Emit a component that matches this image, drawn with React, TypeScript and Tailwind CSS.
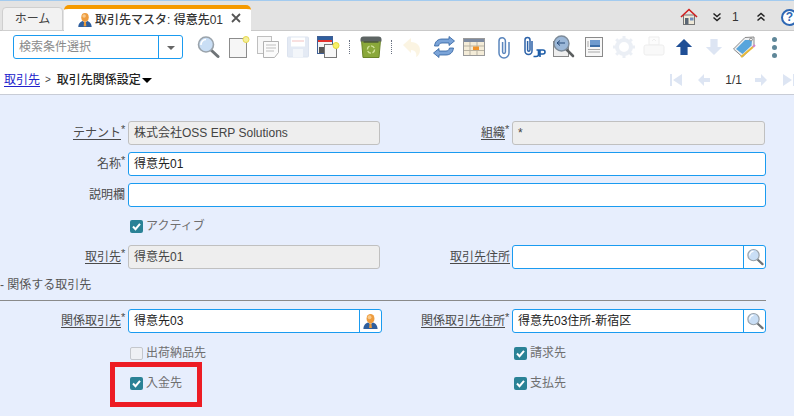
import type { ReactNode } from "react";

const FONT = "font-['Liberation_Sans','Noto_Sans_CJK_JP',sans-serif]";

function PersonIcon({ size = 18 }: { size?: number }) {
  return (
    <svg width={size} height={size} viewBox="0 0 18 18">
      <path d="M1.500 17c0-4 2.500-6.500 5-7l2.500 2 2.500-2c2.500.5 5 3 5 7z" fill="#2f5f9e" />
      <path d="M8 11h2l.5 5h-3z" fill="#e89a3c" />
      <ellipse cx="9" cy="6" rx="4.200" ry="5" fill="#ee9c3e" />
      <ellipse cx="8" cy="4.500" rx="2" ry="2" fill="#f8c98a" />
    </svg>
  );
}

function SearchIcon({ size = 24 }: { size?: number }) {
  return (
    <svg width={size} height={size} viewBox="0 0 24 24">
      <path d="M15 15l7 6.500" stroke="#6f7477" strokeWidth="3" strokeLinecap="round" />
      <circle cx="10" cy="9.500" r="7.500" fill="#c9def5" stroke="#9aa3ab" strokeWidth="1.600" />
      <path d="M5 10a5 5 0 0 1 5-5.500" stroke="#fff" strokeWidth="1.500" fill="none" />
    </svg>
  );
}

function NewDoc() {
  return (
    <svg width="24" height="24" viewBox="0 0 24 24">
      <rect x="3.500" y="3.500" width="17" height="19" fill="#f6f6f6" stroke="#8c8c8c" />
      <circle cx="20" cy="4.500" r="3" fill="#f4ef9a" stroke="#e8d94f" />
    </svg>
  );
}

function CopyDoc() {
  return (
    <svg width="24" height="24" viewBox="0 0 24 24" opacity="0.75">
      <rect x="1.500" y="1.500" width="14" height="17" fill="#f5f5f5" stroke="#aaa" />
      <path d="M7.500 6.500h15v11l-4 5h-11z" fill="#fafafa" stroke="#999" />
      <path d="M10 10h10M10 13h10M10 16h8" stroke="#aaa" />
    </svg>
  );
}

function SaveIcon() {
  return (
    <svg width="24" height="24" viewBox="0 0 24 24" opacity="0.35">
      <rect x="1.500" y="2" width="21" height="20" rx="1" fill="#b5c6e0" stroke="#9db2d4" />
      <rect x="5" y="2.500" width="14" height="9" fill="#fff" />
      <path d="M6 6h12" stroke="#e0524f" />
      <rect x="7" y="14" width="10" height="8" fill="#dfe6f2" />
    </svg>
  );
}

function NewWindow() {
  return (
    <svg width="24" height="24" viewBox="0 0 24 24">
      <rect x="1.500" y="1.500" width="15" height="17" fill="#f3f3f3" stroke="#3f5f95" />
      <rect x="2" y="2" width="14" height="3" fill="#2f5f9e" />
      <rect x="2" y="5" width="14" height="2" fill="#e2312c" />
      <rect x="3" y="12" width="5" height="6" fill="#555" />
      <rect x="8.500" y="9.500" width="12" height="13" fill="#f7f7f7" stroke="#777" />
      <circle cx="20" cy="10.500" r="3" fill="#f6f06a" stroke="#e5d93a" />
    </svg>
  );
}

function RecycleBin() {
  return (
    <svg width="24" height="24" viewBox="0 0 24 24">
      <path d="M2.500 5h19L20 22.500H4z" fill="#8aa83a" stroke="#6a8428" />
      <path d="M1.500 4.500q0-3 3-3h15q3 0 3 3v2h-21z" fill="#5d6463" />
      <path d="M4.500 6.500h15v1h-15z" fill="#2f3534" />
      <circle cx="12" cy="14.500" r="3.600" fill="none" stroke="#d3e39a" strokeWidth="1.400" strokeDasharray="4 1.500" />
    </svg>
  );
}

function UndoIcon() {
  return (
    <svg width="24" height="24" viewBox="0 0 24 24" opacity="0.14">
      <path d="M3 10l8-7v4c6 0 9 4 9 8 0 3-1.500 6-4 7 1-3 0-7-5-7v3z" fill="#e8b93a" />
    </svg>
  );
}

function RefreshIcon() {
  return (
    <svg width="24" height="24" viewBox="0 0 24 24">
      <path d="M2.500 11c.5-4.500 3.500-7 7.500-7h7V1.500L22.500 6 17 10.500V8h-7c-2 0-3 1-3.500 3z" fill="#7ba4d8" stroke="#2f5f9e" strokeWidth="0.800" />
      <path d="M21.500 13c-.5 4.500-3.500 7-7.500 7H7v2.500L1.500 18 7 13.500V16h7c2 0 3-1 3.500-3z" fill="#7ba4d8" stroke="#2f5f9e" strokeWidth="0.800" />
    </svg>
  );
}

function TableIcon() {
  return (
    <svg width="24" height="24" viewBox="0 0 24 24">
      <rect x="1.500" y="3.500" width="21" height="17" fill="#f4ecd8" stroke="#9a9a9a" />
      <rect x="2" y="4" width="20" height="3" fill="#7d8aa0" />
      <path d="M8 7v13M15 7v13M2 11h20M2 15.500h20" stroke="#b9b3a3" />
      <rect x="11" y="11.500" width="6" height="3.500" fill="#f0932b" />
    </svg>
  );
}

function ClipIcon() {
  return (
    <svg width="16" height="24" viewBox="0 0 16 24">
      <path d="M13 7v11a5 5 0 0 1-10 0V6a3.200 3.200 0 0 1 6.400 0v11a1.400 1.400 0 0 1-2.800 0V7" fill="none" stroke="#5b86bd" strokeWidth="1.500" />
    </svg>
  );
}

function ClipJpIcon() {
  return (
    <svg width="24" height="24" viewBox="0 0 24 24">
      <path d="M10 6v10a3.500 3.500 0 0 1-7 0V5a2.500 2.500 0 0 1 5 0v10a1.200 1.200 0 0 1-2.400 0V6" fill="none" stroke="#2d62a8" strokeWidth="1.500" />
      <path d="M14.500 15h2v4.500q0 2-2.500 2h-2.500M18 22v-7h3q2 0 2 2t-2 2h-3" fill="none" stroke="#1f5ea8" strokeWidth="1.600" />
    </svg>
  );
}

function ZoomDoc() {
  return (
    <svg width="24" height="24" viewBox="0 0 24 24">
      <rect x="1.500" y="6.500" width="15" height="15" fill="#eee" stroke="#888" />
      <path d="M14 14l7 7" stroke="#5c5f60" strokeWidth="2.600" strokeLinecap="round" />
      <circle cx="9.500" cy="8.500" r="7.500" fill="#9cb8d8" stroke="#7d8b99" strokeWidth="1.400" />
      <path d="M5 8h8M5 8l3-2.500M5 8l3 2.500" stroke="#274a78" fill="none" />
    </svg>
  );
}

function ReportIcon() {
  return (
    <svg width="24" height="24" viewBox="0 0 24 24">
      <rect x="3.500" y="2.500" width="17" height="19" fill="#f7f7f7" stroke="#8a8a8a" />
      <rect x="8" y="5" width="10" height="7" fill="#6f9bcf" />
      <path d="M8 10h10v2H8z" fill="#3c6ea8" />
      <path d="M6 14.500h12M6 17h12" stroke="#aaa" />
      <path d="M6 6v6" stroke="#aaa" />
    </svg>
  );
}

function GearIcon() {
  return (
    <svg width="24" height="24" viewBox="0 0 24 24" opacity="0.22">
      <circle cx="12" cy="12" r="7" fill="none" stroke="#a9bad6" strokeWidth="4" />
      <path d="M12 1v4M12 19v4M1 12h4M19 12h4M4.200 4.200l2.800 2.800M17 17l2.800 2.800M19.800 4.200L17 7M7 17l-2.800 2.800" stroke="#a9bad6" strokeWidth="3" />
    </svg>
  );
}

function PrintIcon() {
  return (
    <svg width="24" height="24" viewBox="0 0 24 24" opacity="0.16">
      <path d="M7 2h10v8H7z" fill="#eee" stroke="#999" />
      <rect x="2" y="10" width="20" height="10" rx="2" fill="#ddd" stroke="#999" />
      <path d="M10 6l2-2 2 2" stroke="#999" fill="none" />
    </svg>
  );
}

function BigArrow({ down = false, faded = false }: { down?: boolean; faded?: boolean }) {
  return (
    <svg width="18" height="18" viewBox="0 0 20 20" className={down ? "rotate-180" : ""}>
      <path d="M10 1l9 9h-5v9H6v-9H1z" fill={faded ? "#dde5f3" : "#1f4f96"} />
    </svg>
  );
}

function TagIcon() {
  return (
    <svg width="26" height="26" viewBox="0 0 26 26">
      <path d="M2.500 15L14 3.500l9-.5v8.500L11.500 23z" fill="#eef0f2" stroke="#8a8a8a" />
      <path d="M5 15L14 6l7 0-.5 5.500L11.500 20z" fill="#57a5dc" />
      <circle cx="20" cy="5.500" r="1.400" fill="#fff" stroke="#888" />
      <path d="M10 23l12-10" stroke="#e8b93a" strokeWidth="2" />
      <path d="M22 13l2-2" stroke="#d77fc7" strokeWidth="2" />
    </svg>
  );
}

function HomeIcon() {
  return (
    <svg width="18" height="18" viewBox="0 0 18 18">
      <rect x="3.500" y="7" width="11" height="9.500" fill="#efe9d8" stroke="#777" />
      <rect x="5" y="10" width="3.500" height="6.500" fill="#5a6675" />
      <rect x="10" y="9.500" width="3.500" height="3" fill="#6f8fc0" />
      <path d="M1 9l8-7.500L17 9" fill="none" stroke="#d11f1f" strokeWidth="1.600" />
    </svg>
  );
}

function DoubleChevron({ up = false }: { up?: boolean }) {
  return (
    <svg width="10" height="10" viewBox="0 0 10 10" className={up ? "rotate-180" : ""}>
      <path d="M1.500 1.500L5 4.500l3.500-3M1.500 5.500L5 8.500l3.500-3" fill="none" stroke="#222" strokeWidth="1.500" />
    </svg>
  );
}

function NavArrow({ d }: { d: string }) {
  return (
    <svg width="14" height="14" viewBox="0 0 14 14">
      <path d={d} fill="#dde5f3" />
    </svg>
  );
}

function ToolButton({ children, className = "w-[30px]" }: { children: ReactNode; className?: string }) {
  return <div className={`flex h-6 shrink-0 items-center justify-center ${className}`}>{children}</div>;
}

function ToolSep({ className }: { className: string }) {
  return <div className={`h-[14px] shrink-0 border-l border-dotted border-gray-500 ${className}`} />;
}

function Check({ checked = true, label }: { checked?: boolean; label: string }) {
  return (
    <div className="flex h-[14px] items-center gap-[3px]">
      <span
        className={`flex h-[13px] w-[13px] shrink-0 items-center justify-center rounded-[2px] ${
          checked ? "bg-[#2a8296]" : "border border-[#c4c7cc] bg-[#eef0f4]"
        }`}
      >
        {checked && (
          <svg width="11" height="11" viewBox="0 0 11 11">
            <path d="M2 5.500l2.500 2.700L9 2.800" fill="none" stroke="#fff" strokeWidth="2" />
          </svg>
        )}
      </span>
      <span className="text-xs text-[#6f6f6f]">{label}</span>
    </div>
  );
}

function Label({ text, link = false, required = false, className }: { text: string; link?: boolean; required?: boolean; className: string }) {
  return (
    <div className={`flex shrink-0 items-center justify-end text-xs text-[#4a4a4a] ${className}`}>
      <span className={link ? "underline underline-offset-2" : ""}>{text}</span>
      {required && <span className="-mt-[7px] w-[7px] text-[11px] leading-none">*</span>}
    </div>
  );
}

function TextField({ value = "", readOnly = false, className }: { value?: string; readOnly?: boolean; className: string }) {
  return (
    <div
      className={`flex h-6 items-center rounded-[3px] border px-[5px] text-xs ${className} ${
        readOnly ? "border-[#c0c0c0] bg-[#eeeeee] text-[#444]" : "border-[#1a9bf0] bg-white text-[#222]"
      }`}
    >
      {value}
    </div>
  );
}

function LookupField({ value = "", icon, className }: { value?: string; icon: ReactNode; className: string }) {
  return (
    <div className={`flex h-6 rounded-[3px] border border-[#1a9bf0] bg-white text-xs text-[#222] ${className}`}>
      <div className="flex flex-1 items-center px-[5px]">{value}</div>
      <div className="flex w-[22px] items-center justify-center border-l border-[#1a9bf0]">{icon}</div>
    </div>
  );
}

export default function App() {
  return (
    <div className={`relative h-[416px] w-[794px] overflow-hidden bg-[#e7eefd] ${FONT}`}>
      {/* tab bar */}
      <div className="flex h-[31px] items-end border-t border-b border-t-[#a3cbef] border-b-[#c9c9c9] bg-[#e3e3e3] pl-[2px]">
        <div className="-mb-px flex h-[24px] w-[61px] items-center justify-center rounded-t-[4px] border border-[#cfcfcf] bg-[#f2f2f2] text-xs text-[#444]">
          ホーム
        </div>
        <div className="-mb-px ml-px flex h-[26px] w-[187px] items-center rounded-t-[5px] border-t-4 border-[#f59a00] bg-white pl-[13px] text-xs font-medium text-[#333]">
          <PersonIcon size={16} />
          <span className="ml-[2px]">取引先マスタ: 得意先01</span>
          <svg width="10" height="10" viewBox="0 0 10 10" className="mb-[5px] ml-[8px]">
            <path d="M1 1l8 8M9 1l-8 8" stroke="#555" strokeWidth="1.800" />
          </svg>
        </div>
        <div className="mb-[3px] -mr-[4px] ml-auto flex h-[20px] items-center">
          <HomeIcon />
          <div className="ml-[14px]">
            <DoubleChevron />
          </div>
          <span className="ml-[10px] w-[7px] text-xs text-[#333]">1</span>
          <div className="ml-[17px]">
            <DoubleChevron up />
          </div>
          <span className="ml-[15px] flex h-[17px] w-[17px] shrink-0 items-center justify-center rounded-full border-2 border-[#2d67b4] bg-white text-xs font-bold text-[#2d67b4]">
            ?
          </span>
        </div>
      </div>

      {/* toolbar */}
      <div className="flex h-[35px] items-center bg-white pb-[3px] pl-[13px]">
        <div className="flex h-6 w-[170px] shrink-0 rounded-[3px] border border-[#1a9bf0] text-xs text-[#8a8a8a]">
          <div className="flex flex-1 items-center pl-[5px]">検索条件選択</div>
          <div className="flex w-[24px] items-center justify-center border-l border-[#1a9bf0]">
            <span className="mt-px h-0 w-0 border-x-[4px] border-t-[4px] border-x-transparent border-t-[#666]" />
          </div>
        </div>
        <ToolButton className="ml-[10px] w-[30px]"><SearchIcon /></ToolButton>
        <ToolButton><NewDoc /></ToolButton>
        <ToolButton><CopyDoc /></ToolButton>
        <ToolButton><SaveIcon /></ToolButton>
        <ToolButton><NewWindow /></ToolButton>
        <ToolSep className="ml-[6px] mr-[6px]" />
        <ToolButton className="w-[30px]"><RecycleBin /></ToolButton>
        <ToolSep className="ml-[5px] mr-[5px]" />
        <ToolButton><UndoIcon /></ToolButton>
        <ToolButton className="ml-[2px] w-[30px]"><RefreshIcon /></ToolButton>
        <ToolButton><TableIcon /></ToolButton>
        <ToolButton><ClipIcon /></ToolButton>
        <ToolButton><ClipJpIcon /></ToolButton>
        <ToolButton><ZoomDoc /></ToolButton>
        <ToolButton><ReportIcon /></ToolButton>
        <ToolButton><GearIcon /></ToolButton>
        <ToolButton><PrintIcon /></ToolButton>
        <ToolButton><BigArrow /></ToolButton>
        <ToolButton><BigArrow down faded /></ToolButton>
        <ToolButton><TagIcon /></ToolButton>
        <ToolButton>
          <div className="flex flex-col gap-[3px]">
            <span className="h-[5px] w-[5px] rounded-full bg-[#5f8799]" />
            <span className="h-[5px] w-[5px] rounded-full bg-[#5f8799]" />
            <span className="h-[5px] w-[5px] rounded-full bg-[#5f8799]" />
          </div>
        </ToolButton>
      </div>

      {/* breadcrumb */}
      <div className="flex h-[29px] items-center border-b border-[#c8ccd6] bg-white pb-[1px] pl-[4px] text-xs">
        <span className="text-[#2222cc] underline underline-offset-2">取引先</span>
        <span className="ml-[5px] text-[10px] text-[#444]">&gt;</span>
        <span className="ml-[6px] font-medium text-[#222]">取引先関係設定</span>
        <span className="ml-px mt-px h-0 w-0 border-x-[5px] border-t-[5px] border-x-transparent border-t-black" />
        <div className="-mr-[2px] ml-auto flex items-center">
          <NavArrow d="M1 1h2v12H1zM13 1v12L4 7z" />
          <div className="ml-[14px]"><NavArrow d="M1 7l6-6v4h6v4H7v4z" /></div>
          <span className="ml-[14px] text-xs text-[#333]">1/1</span>
          <div className="ml-[12px]"><NavArrow d="M13 7L7 1v4H1v4h6v4z" /></div>
          <div className="ml-[14px]"><NavArrow d="M1 1v12l9-6zM11 1h2v12h-2z" /></div>
        </div>
      </div>

      {/* form */}
      <div className="flex flex-col pt-[26px]">
        <div className="flex">
          <Label text="テナント" link required className="w-[128px]" />
          <TextField value="株式会社OSS ERP Solutions" readOnly className="w-[252px]" />
          <Label text="組織" link required className="w-[132px]" />
          <TextField value="*" readOnly className="w-[253px]" />
        </div>
        <div className="mt-[7px] flex">
          <Label text="名称" required className="w-[128px]" />
          <TextField value="得意先01" className="w-[638px]" />
        </div>
        <div className="mt-[7px] flex">
          <Label text="説明欄" className="w-[128px] pr-[3px]" />
          <TextField className="w-[638px]" />
        </div>
        <div className="mt-[12px] pl-[130px]">
          <Check label="アクティブ" />
        </div>
        <div className="mt-[12px] flex">
          <Label text="取引先" link required className="w-[128px]" />
          <TextField value="得意先01" readOnly className="w-[252px]" />
          <Label text="取引先住所" link className="w-[132px] pr-[2px]" />
          <LookupField className="w-[254px]" icon={<SearchIcon size={18} />} />
        </div>
        <div className="mt-[8px] flex h-[16px] items-center text-xs text-[#555]">- 関係する取引先</div>
        <div className="mt-[7px] h-px w-[766px] bg-[#8a8a8a]" />
        <div className="mt-[8px] flex">
          <Label text="関係取引先" link required className="w-[128px]" />
          <LookupField value="得意先03" className="w-[254px]" icon={<PersonIcon size={17} />} />
          <Label text="関係取引先住所" link required className="w-[130px]" />
          <LookupField value="得意先03住所-新宿区" className="w-[254px]" icon={<SearchIcon size={18} />} />
        </div>
        <div className="mt-[13px] flex">
          <div className="w-[514px] pl-[130px]">
            <Check checked={false} label="出荷納品先" />
          </div>
          <Check label="請求先" />
        </div>
        <div className="mt-[16px] flex">
          <div className="w-[514px] pl-[130px]">
            <Check label="入金先" />
          </div>
          <Check label="支払先" />
        </div>
      </div>

      {/* annotation */}
      <div className="absolute left-[110px] top-[362px] h-[45px] w-[92px] border-[5px] border-[#ed1c24]" />
    </div>
  );
}
